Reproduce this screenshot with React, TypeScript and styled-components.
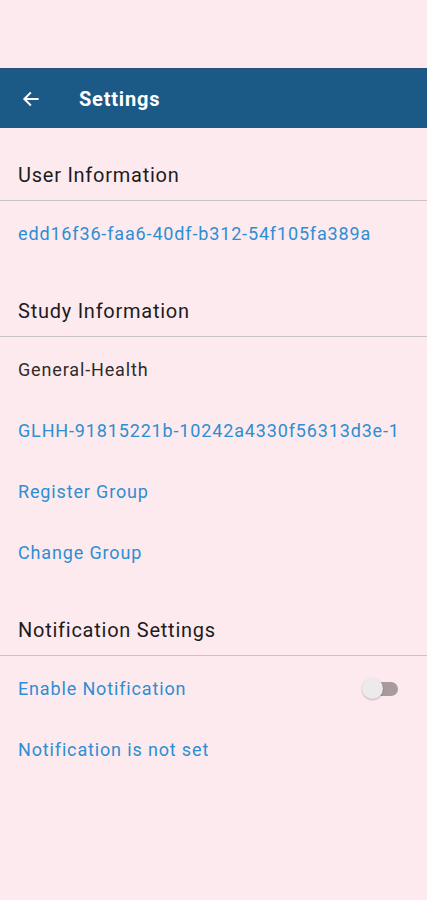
import React from "react";
import styled, { createGlobalStyle } from "styled-components";

const Global = createGlobalStyle`
  html, body { margin: 0; padding: 0; background: #fdeaee; }
  body { font-family: Roboto, "Noto Sans", sans-serif; }
  * { box-sizing: border-box; }
`;

const Page = styled.div`
  width: 427px;
  min-height: 900px;
  background: #fdeaee;
  display: flex;
  flex-direction: column;
`;

const StatusSpace = styled.div`
  height: 68px;
`;

const AppBar = styled.header`
  height: 60px;
  background: #1b5a86;
  border-top: 1px solid #2a4f74;
  display: flex;
  align-items: center;
  padding-left: 20px;
  gap: 37px;
  color: #fff;
`;

const BackBtn = styled.div`
  width: 22px;
  height: 22px;
  display: flex;
  align-items: center;
  justify-content: center;
`;

const Title = styled.h1`
  margin: 0;
  font-size: 20px;
  font-weight: 700;
  letter-spacing: 0.8px;
`;

const SectionHeader = styled.div`
  padding: 35px 18px 13px;
  font-size: 20px;
  line-height: 24px;
  letter-spacing: 0.75px;
  color: #1d1b1c;
  border-bottom: 1px solid #c9c1c3;
`;

const Item = styled.div<{ $link?: boolean }>`
  height: 61px;
  padding: 0 18px;
  display: flex;
  align-items: center;
  justify-content: space-between;
  font-size: 18px;
  letter-spacing: 0.85px;
  color: ${(p) => (p.$link ? "#2d8ed3" : "#2e2b2c")};
`;

const Section = styled.section`
  display: flex;
  flex-direction: column;
`;

const ItemList = styled.div`
  display: flex;
  flex-direction: column;
  padding-top: 2px;
`;

const Switch = styled.div`
  position: relative;
  width: 36px;
  height: 22px;
  margin-right: 11px;
`;

const Track = styled.div`
  position: absolute;
  left: 12px;
  right: 0;
  top: 4px;
  height: 14px;
  border-radius: 7px;
  background: #a89a9e;
`;

const Thumb = styled.div`
  position: absolute;
  left: 0;
  top: 0;
  width: 21px;
  height: 21px;
  border-radius: 50%;
  background: #eceaea;
  box-shadow: 0 1px 2px rgba(0, 0, 0, 0.25);
`;

export default function App() {
  return (
    <Page>
      <Global />
      <StatusSpace />
      <AppBar>
        <BackBtn>
          <svg width="20" height="20" viewBox="0 0 24 24" fill="none">
            <path d="M20 12H5M11 5l-7 7 7 7" stroke="#fff" strokeWidth="2.4" strokeLinecap="square" />
          </svg>
        </BackBtn>
        <Title>Settings</Title>
      </AppBar>

      <Section>
        <SectionHeader>User Information</SectionHeader>
        <ItemList>
          <Item $link>edd16f36-faa6-40df-b312-54f105fa389a</Item>
        </ItemList>
      </Section>

      <Section>
        <SectionHeader>Study Information</SectionHeader>
        <ItemList>
          <Item>General-Health</Item>
          <Item $link>GLHH-91815221b-10242a4330f56313d3e-1</Item>
          <Item $link>Register Group</Item>
          <Item $link>Change Group</Item>
        </ItemList>
      </Section>

      <Section>
        <SectionHeader>Notification Settings</SectionHeader>
        <ItemList>
          <Item $link>
            Enable Notification
            <Switch>
              <Track />
              <Thumb />
            </Switch>
          </Item>
          <Item $link>Notification is not set</Item>
        </ItemList>
      </Section>
    </Page>
  );
}
